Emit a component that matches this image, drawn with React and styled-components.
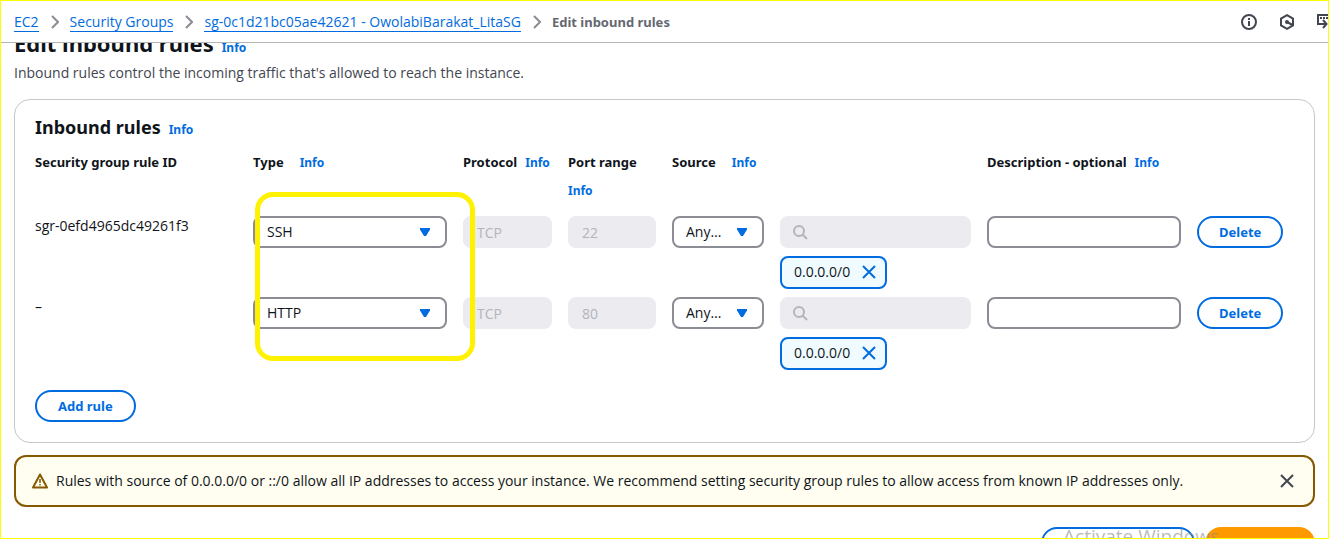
import React from "react";
import styled, { createGlobalStyle, css } from "styled-components";

const color = {
  link: "#006ce0",
  text: "#0f141a",
  muted: "#424650",
  crumb: "#656871",
  border: "#8c8c94",
  disabled: "#ebebf0",
  disabledText: "#b4b4bb",
  warning: "#855900",
};

const bold = css`
  font-family: "Noto Sans", "Open Sans", sans-serif;
  font-size: 13px;
  font-weight: 700;
`;

const GlobalStyle = createGlobalStyle`
  *, *::before, *::after { box-sizing: border-box; }
  body {
    margin: 0;
    background: #fff;
    color: ${color.text};
    font: 400 14px/20px "Open Sans", "Noto Sans", sans-serif;
  }
  button, input, select { font: inherit; color: inherit; margin: 0; }
`;

const Shell = styled.div`
  position: relative;
  display: flex;
  flex-direction: column;
  height: 100vh;
  overflow: hidden;
`;

const ScreenFrame = styled.div`
  position: absolute;
  z-index: 2;
  inset: 0;
  border: 1px solid #ffff00;
  pointer-events: none;
`;

const Header = styled.header`
  position: relative;
  z-index: 1;
  flex: none;
  display: flex;
  align-items: center;
  justify-content: space-between;
  height: 43px;
  padding: 2px 0 0 14px;
  background: #fff;
  border-bottom: 1px solid #b4b4b4;
`;

const Crumbs = styled.ol`
  display: flex;
  align-items: center;
  gap: 11px;
  margin: 0;
  padding: 0;
  list-style: none;
`;

const Crumb = styled.li`
  display: flex;
  align-items: center;
  gap: 12px;
  white-space: nowrap;
  color: ${color.crumb};
  ${(p) => p.$current && bold}
`;

const CrumbLink = styled.a`
  line-height: 18px;
  color: ${color.link};
  text-decoration: none;
  border-bottom: 1px solid currentColor;
`;

const Tools = styled.div`
  display: flex;
  flex: none;
  gap: 22px;
  margin-right: -4px;
`;

const IconButton = styled.button`
  display: flex;
  flex: none;
  padding: 0;
  border: 0;
  background: none;
  color: ${(p) => (p.$accent ? color.link : color.muted)};
  cursor: pointer;
`;

const Main = styled.main`
  flex: none;
  display: flex;
  flex-direction: column;
  margin-top: -16px;
  padding: 0 14px;
`;

const TitleRow = styled.div`
  display: flex;
  align-items: baseline;
  gap: 8px;
`;

const PageTitle = styled.h1`
  ${bold}
  margin: 0;
  font-size: 22px;
  line-height: 32px;
`;

const SectionTitle = styled.h2`
  ${bold}
  margin: 0;
  font-size: 18px;
  line-height: 24px;
`;

const InfoLink = styled.a`
  ${bold}
  color: ${color.link};
  font-size: 12px;
  text-decoration: none;
`;

const Lead = styled.p`
  margin: 4px 0 16px;
  color: ${color.muted};
`;

const Card = styled.section`
  padding: 15px 20px 20px;
  border: 1px solid #c6c6cd;
  border-radius: 16px;
`;

const RulesTable = styled.table`
  display: block;
  margin: 8px 0 20px;
  thead, tbody { display: block; }
`;

const Row = styled.tr`
  display: grid;
  grid-template-columns:
    minmax(0, 202fr) minmax(0, 194fr) minmax(0, 89fr) minmax(0, 88fr)
    minmax(0, 92fr) minmax(0, 191fr) minmax(0, 194fr) minmax(0, 97fr);
  column-gap: 16px;
  align-items: start;
  margin-bottom: 8px;
  &:last-child { margin-bottom: 0; }
`;

const HeadRow = styled(Row)`
  && { margin-bottom: 11px; }
`;

const HeadCell = styled.th`
  ${bold}
  display: flex;
  flex-wrap: wrap;
  align-items: baseline;
  gap: 1px ${(p) => p.$gap || 8}px;
  padding: 0;
  line-height: 28px;
  text-align: left;
  white-space: nowrap;
  ${(p) => p.$span && css`grid-column: span ${p.$span};`}
`;

const Cell = styled.td`
  display: block;
  padding: 0;
`;

const field = css`
  display: block;
  width: 100%;
  height: 32px;
  padding: 0 12px;
  border: 2px solid ${color.border};
  border-radius: 8px;
  background: #fff;
  &:disabled {
    border-color: ${color.disabled};
    background: ${color.disabled};
    color: ${color.disabledText};
    opacity: 1;
  }
`;

const TextInput = styled.input`
  ${field}
`;

const SelectWrap = styled.div`
  display: grid;
  align-items: center;
  & > * { grid-area: 1 / 1; }
  & > svg {
    justify-self: end;
    margin-right: 17px;
    pointer-events: none;
  }
`;

const SelectInput = styled.select`
  ${field}
  appearance: none;
  padding-right: 28px;
`;

const SearchWrap = styled.div`
  display: grid;
  align-items: center;
  color: ${color.disabledText};
  & > * { grid-area: 1 / 1; }
  & > svg { margin-left: 12px; }
`;

const Chip = styled.div`
  display: inline-flex;
  align-items: center;
  gap: 11px;
  height: 33px;
  margin-top: 8px;
  padding: 0 8px 1px 12px;
  border: 2px solid ${color.link};
  border-radius: 8px;
  background: #f0fbff;
  vertical-align: top;
`;

const Button = styled.button`
  ${bold}
  height: 32px;
  padding: 0 ${(p) => (p.$compact ? 20 : 21)}px;
  border: 2px solid ${(p) => (p.$kind === "primary" ? "#ff9900" : p.$kind === "link" ? "transparent" : color.link)};
  border-radius: 20px;
  background: ${(p) => (p.$kind === "primary" ? "#ff9900" : "#fff")};
  color: ${(p) => (p.$kind === "primary" ? color.text : color.link)};
  white-space: nowrap;
  cursor: pointer;
`;

const Warning = styled.div`
  display: flex;
  align-items: center;
  gap: 8px;
  margin-top: 12px;
  padding: 14px 18px 14px 16px;
  border: 2px solid ${color.warning};
  border-radius: 12px;
  background: #fffef0;
  & > p { flex: 1; margin: 0; }
`;

const Footer = styled.footer`
  display: flex;
  justify-content: flex-end;
  gap: 10px;
  margin-top: 20px;
`;

const Highlight = styled.div`
  position: absolute;
  z-index: 2;
  top: 192px;
  left: 255px;
  width: 220px;
  height: 169px;
  border: 5px solid #fff200;
  border-radius: 18px;
  pointer-events: none;
`;

const Watermark = styled.div`
  position: absolute;
  right: 110px;
  bottom: -10px;
  font-size: 19px;
  line-height: 26px;
  color: rgba(140, 140, 140, 0.6);
  pointer-events: none;
`;

const Chevron = () => (
  <svg width="8" height="14" viewBox="0 0 8 14" fill="none" stroke={color.border} strokeWidth="2" aria-hidden="true">
    <path d="M1 1l6 6-6 6" />
  </svg>
);

const Caret = () => (
  <svg width="10" height="8" viewBox="0 0 10 8" aria-hidden="true">
    <path d="M0 0h10v1.500L6 8H4L0 1.500z" fill={color.link} />
  </svg>
);

const Close = () => (
  <svg width="16" height="16" viewBox="0 0 16 16" fill="none" stroke="currentColor" strokeWidth="2" aria-hidden="true">
    <path d="M2 2l12 12M14 2L2 14" />
  </svg>
);

const SearchIcon = () => (
  <svg width="16" height="16" viewBox="0 0 16 16" fill="none" stroke="currentColor" strokeWidth="2" aria-hidden="true">
    <circle cx="7" cy="7" r="5" />
    <path d="M10.500 10.500L15 15" />
  </svg>
);

const InfoIcon = () => (
  <svg width="16" height="16" viewBox="0 0 16 16" fill="none" stroke="currentColor" strokeWidth="2" aria-hidden="true">
    <circle cx="8" cy="8" r="7" />
    <path d="M8 4v2M8 7v5" />
  </svg>
);

const HexIcon = () => (
  <svg width="16" height="16" viewBox="0 0 16 16" fill="none" stroke="currentColor" strokeWidth="2" aria-hidden="true">
    <path d="M8 1.200l6 3.400v6.800l-6 3.400-6-3.400V4.600z" />
    <circle cx="8" cy="8" r="2" fill="currentColor" stroke="none" />
    <path d="M8 8l5.500 3" />
  </svg>
);

const ShellIcon = () => (
  <svg width="16" height="16" viewBox="0 0 16 16" fill="none" stroke="currentColor" strokeWidth="2" aria-hidden="true">
    <path d="M4 10H1V1h14v9" />
    <path d="M3 4h10" strokeDasharray="2 1" />
    <path d="M4 10h5M6 6l3.500 4L6 14" />
    <path d="M11 15h4" />
  </svg>
);

const WarningIcon = () => (
  <svg width="16" height="16" viewBox="0 0 16 16" fill="none" stroke={color.warning} strokeWidth="2" strokeLinejoin="round" aria-hidden="true">
    <path d="M8 1.500L15 14.500H1z" />
    <path d="M8 6v4M8 11v1.500" strokeWidth="1.500" />
  </svg>
);

const Info = () => <InfoLink href="#info">Info</InfoLink>;

const rules = [
  { id: "sgr-0efd4965dc49261f3", type: "SSH", port: "22" },
  { id: "–", type: "HTTP", port: "80" },
];

function Select({ label, value }) {
  return (
    <SelectWrap>
      <SelectInput aria-label={label} defaultValue={value}>
        <option>{value}</option>
      </SelectInput>
      <Caret />
    </SelectWrap>
  );
}

function RuleRow({ rule }) {
  return (
    <Row>
      <Cell>{rule.id}</Cell>
      <Cell><Select label="Type" value={rule.type} /></Cell>
      <Cell><TextInput aria-label="Protocol" defaultValue="TCP" disabled /></Cell>
      <Cell><TextInput aria-label="Port range" defaultValue={rule.port} disabled /></Cell>
      <Cell><Select label="Source type" value="Any…" /></Cell>
      <Cell>
        <SearchWrap>
          <TextInput aria-label="Source" disabled />
          <SearchIcon />
        </SearchWrap>
        <Chip>
          0.0.0.0/0
          <IconButton $accent aria-label="Remove 0.0.0.0/0"><Close /></IconButton>
        </Chip>
      </Cell>
      <Cell><TextInput aria-label="Description" /></Cell>
      <Cell><Button $compact>Delete</Button></Cell>
    </Row>
  );
}

export default function App() {
  return (
    <Shell>
      <GlobalStyle />
      <Header>
        <nav aria-label="Breadcrumbs">
          <Crumbs>
            <Crumb><CrumbLink href="#ec2">EC2</CrumbLink><Chevron /></Crumb>
            <Crumb><CrumbLink href="#groups">Security Groups</CrumbLink><Chevron /></Crumb>
            <Crumb><CrumbLink href="#group">sg-0c1d21bc05ae42621 - OwolabiBarakat_LitaSG</CrumbLink><Chevron /></Crumb>
            <Crumb $current>Edit inbound rules</Crumb>
          </Crumbs>
        </nav>
        <Tools>
          <IconButton aria-label="Information"><InfoIcon /></IconButton>
          <IconButton aria-label="Assistant"><HexIcon /></IconButton>
          <IconButton aria-label="CloudShell"><ShellIcon /></IconButton>
        </Tools>
      </Header>
      <Main>
        <TitleRow><PageTitle>Edit inbound rules</PageTitle><Info /></TitleRow>
        <Lead>Inbound rules control the incoming traffic that's allowed to reach the instance.</Lead>
        <Card>
          <TitleRow><SectionTitle>Inbound rules</SectionTitle><Info /></TitleRow>
          <RulesTable>
            <thead>
              <HeadRow>
                <HeadCell>Security group rule ID</HeadCell>
                <HeadCell $gap={16}>Type <Info /></HeadCell>
                <HeadCell>Protocol <Info /></HeadCell>
                <HeadCell $gap={16}>Port range <Info /></HeadCell>
                <HeadCell $gap={16} $span={2}>Source <Info /></HeadCell>
                <HeadCell $span={2}>Description - optional <Info /></HeadCell>
              </HeadRow>
            </thead>
            <tbody>
              {rules.map((rule) => <RuleRow key={rule.type} rule={rule} />)}
            </tbody>
          </RulesTable>
          <Button>Add rule</Button>
        </Card>
        <Warning role="alert">
          <WarningIcon />
          <p>
            Rules with source of 0.0.0.0/0 or ::/0 allow all IP addresses to access your instance. We recommend
            setting security group rules to allow access from known IP addresses only.
          </p>
          <IconButton aria-label="Dismiss"><Close /></IconButton>
        </Warning>
        <Footer>
          <Button $kind="link">Cancel</Button>
          <Button>Preview changes</Button>
          <Button $kind="primary" $compact>Save rules</Button>
        </Footer>
      </Main>
      <Highlight />
      <Watermark>Activate Windows</Watermark>
      <ScreenFrame />
    </Shell>
  );
}
